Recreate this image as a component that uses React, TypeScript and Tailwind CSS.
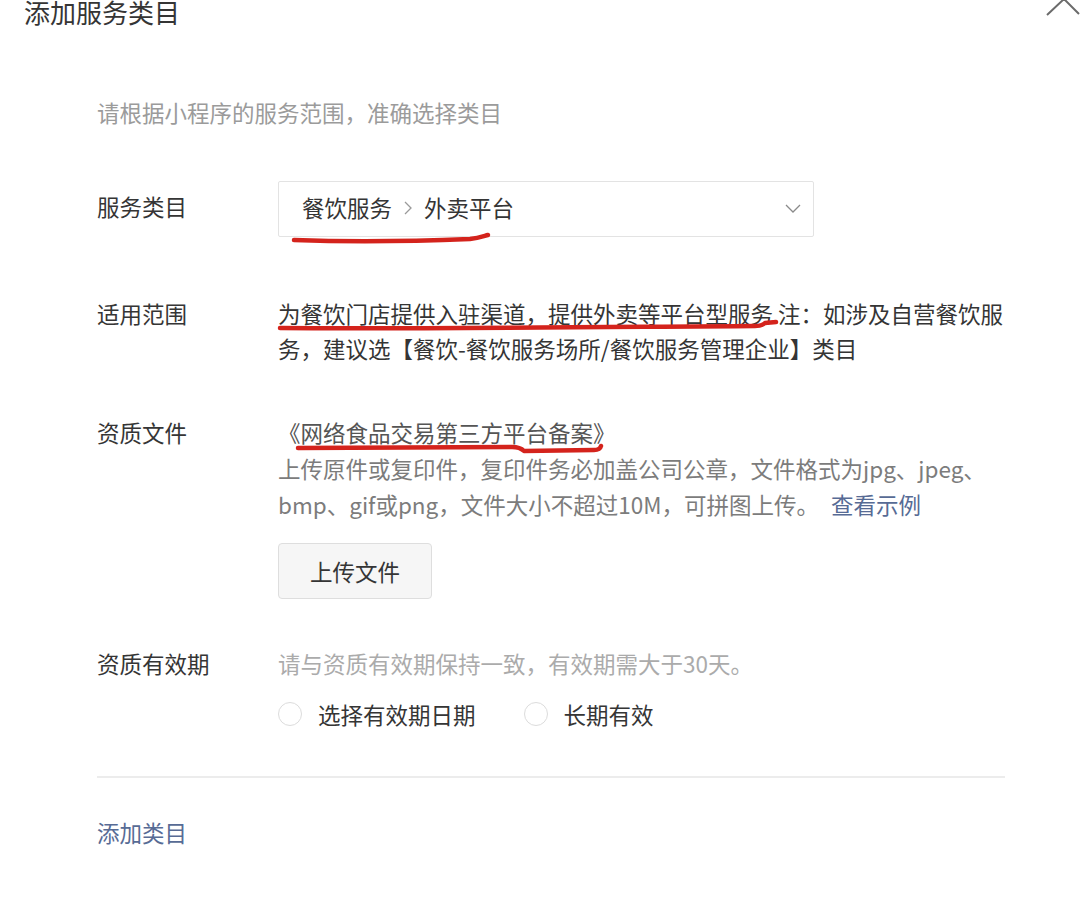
import React from 'react';

const font = { fontFamily: '"Noto Sans CJK SC", "Noto Sans", sans-serif' };

const Radio: React.FC<{ label: string }> = ({ label }) => (
  <label className="flex items-center gap-4">
    <span className="w-[24px] h-[24px] rounded-full border border-[#dcdcdc] bg-white" />
    <span className="text-[#353535]">{label}</span>
  </label>
);

export default function App() {
  return (
    <div className="relative w-[1080px] h-[898px] bg-white overflow-hidden text-[22.5px]" style={font}>
      {/* Header */}
      <div className="relative px-[24px]">
        <h2 className="text-[26px] leading-[24px] text-[#353535] font-normal">添加服务类目</h2>
        <svg className="absolute right-0 top-0" width="36" height="16" viewBox="0 0 36 16">
          <path d="M3 15 L20 -1 L35 14" fill="none" stroke="#6b6b6b" strokeWidth="2" />
        </svg>
      </div>

      <div className="pl-[97px] pr-[75px]">
        <p className="mt-[70px] leading-[36px] text-[#9b9b9b]">请根据小程序的服务范围，准确选择类目</p>

        {/* 服务类目 */}
        <div className="mt-[51px] grid grid-cols-[181px_1fr]">
          <div className="leading-[50px] text-[#353535]">服务类目</div>
          <div className="w-[536px] h-[56px] border border-[#e3e3e3] rounded-[2px] flex items-center justify-between pl-[23px] pr-[12px]">
            <div className="flex items-center gap-[12px] text-[#353535] -mt-[2px]">
              <span>餐饮服务</span>
              <svg width="8" height="14" viewBox="0 0 8 14">
                <path d="M1 1 L7 7 L1 13" fill="none" stroke="#9a9a9a" strokeWidth="1.3" />
              </svg>
              <span>外卖平台</span>
            </div>
            <svg width="16" height="10" viewBox="0 0 16 10">
              <path d="M1 1 L8 8 L15 1" fill="none" stroke="#8a8a8a" strokeWidth="1.3" />
            </svg>
          </div>
        </div>

        {/* 适用范围 */}
        <div className="mt-[59px] grid grid-cols-[181px_1fr] leading-[35px]">
          <div className="text-[#353535]">适用范围</div>
          <p className="text-[#353535]">
            为餐饮门店提供入驻渠道，提供外卖等平台型服务 注：如涉及自营餐饮服务，建议选【餐饮-餐饮服务场所/餐饮服务管理企业】类目
          </p>
        </div>

        {/* 资质文件 */}
        <div className="mt-[48px] grid grid-cols-[181px_1fr] leading-[36px]">
          <div className="text-[#353535]">资质文件</div>
          <div>
            <p className="text-[#555555]">《网络食品交易第三方平台备案》</p>
            <p className="text-[#7c7c7c]">
              上传原件或复印件，复印件务必加盖公司公章，文件格式为jpg、jpeg、bmp、gif或png，文件大小不超过10M，可拼图上传。
              <span className="ml-[12px] text-[#576b95]">查看示例</span>
            </p>
            <button className="mt-[21px] w-[154px] h-[56px] bg-[#f6f6f6] border border-[#dedede] rounded-[4px] text-[#353535]">
              上传文件
            </button>
          </div>
        </div>

        {/* 资质有效期 */}
        <div className="mt-[46px] grid grid-cols-[181px_1fr] leading-[36px]">
          <div className="text-[#353535]">资质有效期</div>
          <div>
            <p className="text-[#ababab]">请与资质有效期保持一致，有效期需大于30天。</p>
            <div className="mt-[15px] flex items-center gap-[48px]">
              <Radio label="选择有效期日期" />
              <Radio label="长期有效" />
            </div>
          </div>
        </div>

        <div className="mt-[44px] h-[2px] bg-[#ececec]" />

        <p className="mt-[36px] leading-[36px] text-[#576b95]">添加类目</p>
      </div>

      {/* hand-drawn red marks */}
      <svg className="absolute inset-0 pointer-events-none" width="1080" height="898" viewBox="0 0 1080 898">
        <g fill="none" stroke="#d4231c" strokeWidth="4.5" strokeLinecap="round" strokeLinejoin="round">
          <path d="M294 240 C 350 242, 420 241, 470 239 C 479 238, 484 236, 488 235" />
          <path d="M280 328 C 420 329, 600 327, 755 326 Q 762 326 765 323 L 776 322" />
          <path d="M298 448 L 512 447 Q 520 447 524 451 L 594 450 Q 600 450 601 446" />
        </g>
      </svg>
    </div>
  );
}
